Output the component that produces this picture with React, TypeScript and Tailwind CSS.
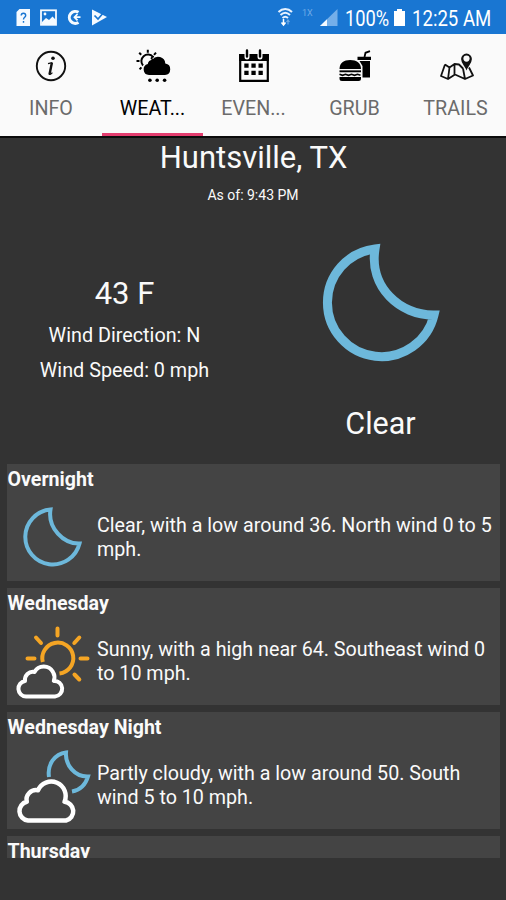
import React from 'react';

const InfoIcon = () => (
  <svg className="h-10 w-10" viewBox="31 46 40 40" fill="none">
    <circle cx="51" cy="66" r="14.2" stroke="#111" strokeWidth="1.9" />
    <circle cx="53" cy="58.2" r="1.8" fill="#111" />
    <path d="M48 63.6L52.4 62.6M49 74.2c.8.6 2.4-.4 3.4-1.6" stroke="#111" strokeWidth="1.2" />
    <path d="M51.9 62.8L49.5 74.5" stroke="#111" strokeWidth="2.4" />
  </svg>
);

const WeatherIcon = () => (
  <svg className="h-10 w-10" viewBox="133 46 40 40" fill="none">
    <path d="M143 65.5A6.6 6.6 0 0 1 153 56.8" stroke="#000" strokeWidth="2" />
    <path d="M147.8 49.8v3M139.2 52.8l2 2M156 52.6l-2 2.2M136.5 61h3M139.6 69.3l1.8-2" stroke="#000" strokeWidth="2" />
    <path d="M149 75a5.6 5.6 0 0 1-1.2-11a5 5 0 0 1 4.500-4.200a7.200 7.200 0 0 1 13 3.700a5.800 5.800 0 0 1-0.300 11.500z" fill="#000" />
    <path d="M153 59.500c-3-1-1.500-2.500 1-3" stroke="#000" strokeWidth="1.500" />
    <circle cx="149.900" cy="80.300" r="1.800" fill="#000" />
    <circle cx="157.200" cy="80.300" r="1.800" fill="#000" />
    <circle cx="164.600" cy="80.300" r="1.800" fill="#000" />
  </svg>
);

const EventsIcon = () => (
  <svg className="h-10 w-10" viewBox="234 46 40 40" fill="none">
    <path d="M240.2 55h27.600v25.800h-27.600z" stroke="#000" strokeWidth="2.2" />
    <path d="M239.1 54h29.800v7h-29.800z" fill="#000" />
    <path d="M247 49v8M260 49v8" stroke="#fafafa" strokeWidth="5" strokeLinecap="round" />
    <path d="M247 50.500v6M260 50.500v6" stroke="#000" strokeWidth="2.4" strokeLinecap="round" />
    <path d="M244.300 65.700h18.500M244.300 72.800h18.500" stroke="#000" strokeWidth="4.2" strokeDasharray="4.3 2.8" />
  </svg>
);

const GrubIcon = () => (
  <svg className="h-10 w-10" viewBox="335 46 40 40" fill="none">
    <path d="M357.500 56.800h13.500v3.200h-13.500zM359.500 61h10.500v16.500h-7.500V66z" fill="#000" />
    <path d="M364.500 57l1-4.200l4.500-1.600" stroke="#000" strokeWidth="1.8" />
    <path d="M339.500 69c0-6 4.300-9 10.700-9s10.800 3 10.800 9z" fill="#000" />
    <path d="M339.500 71.300h21.500" stroke="#000" strokeWidth="1.9" />
    <path d="M339.500 74.300l3 1l3-1l3 1l3-1l3 1l3-1l3 1" stroke="#000" strokeWidth="1.6" />
    <path d="M339.500 77h21.500v1.500a2.500 2.500 0 0 1-2.500 2.500h-16.500a2.500 2.500 0 0 1-2.500-2.500z" fill="#000" />
  </svg>
);

const TrailsIcon = () => (
  <svg className="h-10 w-10" viewBox="436 46 40 40" fill="none" stroke="#111" strokeWidth="1.8">
    <path d="M445 64.500l-4 11.500l7 3l7-4.500l10 4.500l8-3.500l-4-8M445 64.500l4.500 3l5-3.500l4.500.5l4 4M449.500 67.500l-1.500 11.500M454.500 64v10.500M463 68.500l2 10.500" strokeLinejoin="round" />
    <path d="M466.500 68.500c-1.600-3.600-4.600-5.800-4.600-9.500a4.600 4.600 0 0 1 9.200 0c0 3.700-3 5.900-4.600 9.500z" fill="#111" strokeWidth="1.6" />
    <circle cx="466.500" cy="58.600" r="3.100" fill="#fafafa" stroke="none" />
  </svg>
);

const tabs = [
  { label: 'INFO', icon: <InfoIcon />, active: false },
  { label: 'WEAT...', icon: <WeatherIcon />, active: true },
  { label: 'EVEN...', icon: <EventsIcon />, active: false },
  { label: 'GRUB', icon: <GrubIcon />, active: false },
  { label: 'TRAILS', icon: <TrailsIcon />, active: false },
];

const Moon = () => (
  <svg className="h-[120px] w-[120px]" viewBox="1 0 120 120" fill="none">
    <path d="M55 7A54 54 0 1 0 114 73C80 73.5 49 45 55 7Z" stroke="#6db8db" strokeWidth="9" />
  </svg>
);

const ClearNight = () => (
  <svg className="h-20 w-[90px]" viewBox="7 497 90 80" fill="none">
    <path d="M50.5 508.5A27.5 27.5 0 1 0 79.5 542.5C63.5 543 47.5 527 50.5 508.5Z" stroke="#6db8db" strokeWidth="4" />
  </svg>
);

const SunnyCloud = () => (
  <svg className="h-20 w-[90px]" viewBox="7 621 90 80" fill="none" strokeLinecap="round">
    <g stroke="#f5a524" strokeWidth="4">
      <path d="M42.8 661A15.5 15.5 0 1 1 59.5 672.5" strokeLinecap="butt" />
      <path d="M57.5 627.5v7M36 636.500l5 5.500M79.300 636.500l-5 5.500M27.500 657.500h7M80.500 657.500h7M74.500 673.500l4.800 5" />
    </g>
    <path d="M26 695.500a7.800 7.800 0 0 1-1-15.500a8 8 0 0 1 9.500-9a10.500 10.500 0 0 1 18.500 0a10.500 10.500 0 0 1 .8 9a7.600 7.600 0 0 1 1.200 15.500z" stroke="#fff" strokeWidth="4" strokeLinejoin="round" />
  </svg>
);

const CloudyNight = () => (
  <svg className="h-20 w-[90px]" viewBox="7 745 90 80" fill="none">
    <path d="M49 776C47 763 55 753 66 751.5C65 764 75 776 88 775.5C85.5 784 80.5 789 72 790.5" stroke="#6db8db" strokeWidth="4" />
    <path d="M28 819.500a9.500 9.500 0 0 1-1.200-18.700a9.500 9.500 0 0 1 11.200-11.500a13.800 13.800 0 0 1 26.500 11.500a9.500 9.500 0 0 1 1.500 18.700z" stroke="#fff" strokeWidth="4.5" strokeLinejoin="round" />
  </svg>
);

const forecasts = [
  { day: 'Overnight', text: 'Clear, with a low around 36. North wind 0 to 5 mph.', icon: <ClearNight /> },
  { day: 'Wednesday', text: 'Sunny, with a high near 64. Southeast wind 0 to 10 mph.', icon: <SunnyCloud /> },
  { day: 'Wednesday Night', text: 'Partly cloudy, with a low around 50. South wind 5 to 10 mph.', icon: <CloudyNight /> },
  { day: 'Thursday', text: '', icon: null },
];

const StatusBar = () => (
  <header className="flex h-[34px] shrink-0 items-center justify-between bg-[#1976d2] text-white">
    <svg className="h-[34px] w-[110px]" viewBox="0 0 110 34" fill="none">
      <path d="M19.5 9h10.500v17H16.500V12z" fill="#f5faff" />
      <path d="M21.200 15.500c0-3 4.500-3 4.500 0c0 1.800-2.200 1.800-2.200 4M23.500 21v1.800" stroke="#1976d2" strokeWidth="1.4" />
      <rect x="41" y="10.3" width="15" height="14.5" stroke="#f5faff" strokeWidth="1.8" />
      <path d="M42 22l4-4l3 2l3.500-3.500L56 20v4H42z" fill="#f5faff" />
      <circle cx="45" cy="14" r="1.4" fill="#f5faff" />
      <path d="M78.500 12.300A6 6 0 1 0 78.500 22.500" stroke="#f5faff" strokeWidth="3" />
      <path d="M80.500 17.200h-6M77.500 14l-3 3.200l3 3.200" stroke="#f5faff" strokeWidth="1.8" />
      <path d="M92 9.500L107 17L92 25.500z" fill="#f5faff" />
      <path d="M94.500 15.500l3.500 3.500l6.500-7.500" stroke="#1976d2" strokeWidth="1.7" />
    </svg>
    <div className="flex h-[34px] items-center">
      <svg className="h-[34px] w-[70px]" viewBox="274 0 70 34" fill="none">
        <path d="M278.500 12c4-4 9.500-4 13.500 0M280.500 15c3-2.800 6.500-2.800 9.500 0M282.500 18c1.800-1.600 3.700-1.600 5.500 0" stroke="#e7f2ff" strokeWidth="2" />
        <path d="M283.500 19v5M281.500 22.500l2 2.500l2-2.500" stroke="#fff" strokeWidth="1.5" />
        <path d="M288 24.500v-5M286.500 22l1.500-2l1.500 2" stroke="#6faae5" strokeWidth="1.2" />
        <text x="302" y="15.5" fill="#6eaae7" fontSize="9" fontFamily="Roboto, sans-serif">1X</text>
        <path d="M337.500 9v17H320z" fill="#75afe9" />
        <path d="M327 19.200V26h-7z" fill="#f5faff" />
      </svg>
      <div className="w-[49px] pt-[3px] pl-[1px]">
        <span className="block origin-left scale-x-[0.83] text-[22px] leading-[34px] whitespace-nowrap">100%</span>
      </div>
      <svg className="h-[34px] w-[18px]" viewBox="393 0 18 34">
        <path d="M397 9h5v2h3v15h-11V11h3z" fill="#fff" />
      </svg>
      <div className="w-[95px] pt-[3px] pl-[1px]">
        <span className="block origin-left scale-x-[0.845] text-[22px] leading-[34px] whitespace-nowrap">12:25 AM</span>
      </div>
    </div>
  </header>
);

const App: React.FC = () => {
  return (
    <div
      className="flex h-[900px] w-[506px] flex-col overflow-hidden bg-[#333333] text-[#fafafa]"
      style={{ fontFamily: 'Roboto, sans-serif' }}
    >
      <StatusBar />

      <nav className="grid h-[104px] shrink-0 grid-cols-[102px_101px_101px_101px_101px] border-b-2 border-[#0c0c0c] bg-[#fafafa]">
        {tabs.map((tab) => (
          <div
            key={tab.label}
            className={
              tab.active
                ? 'flex flex-col items-center border-b-[3px] border-[#e43d6f] pt-3 text-black'
                : 'flex flex-col items-center pt-3 text-[#6b6b6b]'
            }
          >
            {tab.icon}
            <span className="mt-[11px] text-[19.7px] leading-6">{tab.label}</span>
          </div>
        ))}
      </nav>

      <section className="h-[326px] shrink-0 text-center">
        <h1 className="pt-[2px] pl-[1px] text-[31px] leading-9">Huntsville, TX</h1>
        <p className="mt-[11px] text-[14px] leading-4">As of: 9:43 PM</p>
        <div className="grid grid-cols-2">
          <div className="pt-[73px] pr-[4px]">
            <p className="text-[31px] leading-9">43 F</p>
            <p className="mt-3 text-[19.8px] leading-6">Wind Direction: N</p>
            <p className="mt-[11px] text-[19.8px] leading-6">Wind Speed: 0 mph</p>
          </div>
          <div className="flex flex-col items-center pt-[39px] pl-[2px]">
            <Moon />
            <p className="mt-[44px] text-[30.5px] leading-9">Clear</p>
          </div>
        </div>
      </section>

      <main className="mr-[6px] ml-[7px] flex h-[394px] shrink-0 flex-col gap-[7px] overflow-hidden">
        {forecasts.map((item) => (
          <article key={item.day} className="h-[117px] shrink-0 bg-[#444444]">
            <h2 className="pt-1 pl-[0.5px] text-[19.6px] leading-6 font-bold">{item.day}</h2>
            <div className="flex h-[91px] items-center">
              <div className="w-[90px] shrink-0">{item.icon}</div>
              <p className="text-[19.7px] leading-[23.4px]">{item.text}</p>
            </div>
          </article>
        ))}
      </main>
    </div>
  );
};

export default App;
